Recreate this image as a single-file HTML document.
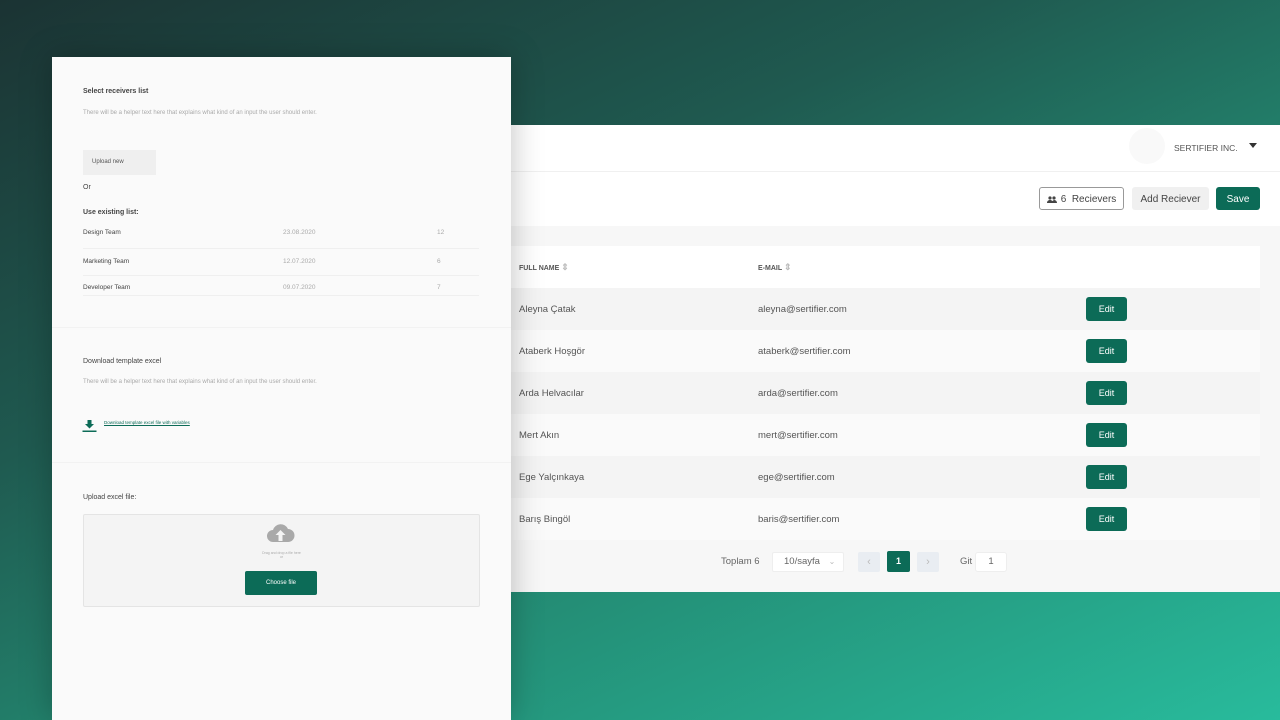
<!DOCTYPE html>
<html><head><meta charset="utf-8"><style>
*{margin:0;padding:0;box-sizing:border-box}
body{width:1280px;height:720px;overflow:hidden;position:relative;font-family:"Liberation Sans",sans-serif;background:linear-gradient(155deg,#1b3333 0%,#1f5a50 35%,#23866f 60%,#28bb9c 100%)}
.abs{position:absolute}
#right{left:511px;top:125px;width:769px;height:467px;background:#f7f7f7}
#hdr{left:0;top:0;width:769px;height:47px;background:#fff;border-bottom:1px solid #f0f0f0}
#tool{left:0;top:47px;width:769px;height:54px;background:#fff}
.btn{position:absolute;font-size:10px;display:flex;align-items:center;justify-content:center;border-radius:3px}
#tbl{left:0;top:121px;width:749px;height:293px;background:#fff}
.row{position:absolute;left:0;width:749px;height:42px;font-size:9.5px;color:#555}
.row span{position:absolute;top:16px}
.edit{position:absolute;left:575px;top:9px;width:41px;height:24px;background:#0c6b57;color:#fff;font-size:9px;border-radius:3px;display:flex;align-items:center;justify-content:center}
#left{left:52px;top:57px;width:459px;height:663px;background:#fafafa;box-shadow:0 0 30px rgba(0,0,0,.25)}
.t{position:absolute;font-size:7px;color:#444}
.h{position:absolute;font-size:6px;color:#aaa}
.line{position:absolute;height:1px;background:#efefef}
</style></head><body>
<div id="right" class="abs">
 <div id="hdr" class="abs">
  <div class="abs" style="left:618px;top:3px;width:36px;height:36px;border-radius:50%;background:#f9f9f9"></div>
  <div class="abs" style="left:663px;top:18px;font-size:8.5px;color:#555">SERTIFIER INC.</div>
  <div class="abs" style="left:738px;top:18px;width:0;height:0;border-left:4px solid transparent;border-right:4px solid transparent;border-top:5px solid #333"></div>
 </div>
 <div id="tool" class="abs">
  <div class="btn" style="left:528px;top:15px;width:85px;height:23px;border:1px solid #999;color:#444;background:#fff;padding-top:2px"><svg width="10" height="8" viewBox="0 0 10 8" style="margin-right:4px"><circle cx="3" cy="2" r="1.6" fill="#444"/><circle cx="7" cy="2" r="1.6" fill="#444"/><path d="M0 7c0-2 1.5-3 3-3s3 1 3 3zM5 7c0-1.5.5-2.5 2-3 1.5 0 3 1 3 3z" fill="#444"/></svg>6 &nbsp;Recievers</div>
  <div class="btn" style="left:621px;top:15px;width:77px;height:23px;background:#f0f0f0;color:#444;padding-top:1px">Add Reciever</div>
  <div class="btn" style="left:705px;top:15px;width:44px;height:23px;background:#0c6b57;color:#fff;padding-top:2px">Save</div>
 </div>
 <div id="tbl" class="abs">
  <div class="row" style="top:0;background:#fff;font-size:7px;font-weight:bold;color:#555"><span style="left:8px;top:16px">FULL NAME <span style="position:static;color:#bbb;font-size:9px">⇕</span></span><span style="left:247px;top:16px">E-MAIL <span style="position:static;color:#bbb;font-size:9px">⇕</span></span></div>
  <div class="row" style="top:42px;background:#f4f4f4"><span style="left:8px">Aleyna Çatak</span><span style="left:247px">aleyna@sertifier.com</span><div class="edit">Edit</div></div>
  <div class="row" style="top:84px;background:#fafafa"><span style="left:8px">Ataberk Hoşgör</span><span style="left:247px">ataberk@sertifier.com</span><div class="edit">Edit</div></div>
  <div class="row" style="top:126px;background:#f4f4f4"><span style="left:8px">Arda Helvacılar</span><span style="left:247px">arda@sertifier.com</span><div class="edit">Edit</div></div>
  <div class="row" style="top:168px;background:#fafafa"><span style="left:8px">Mert Akın</span><span style="left:247px">mert@sertifier.com</span><div class="edit">Edit</div></div>
  <div class="row" style="top:210px;background:#f4f4f4"><span style="left:8px">Ege Yalçınkaya</span><span style="left:247px">ege@sertifier.com</span><div class="edit">Edit</div></div>
  <div class="row" style="top:252px;background:#fafafa"><span style="left:8px">Barış Bingöl</span><span style="left:247px">baris@sertifier.com</span><div class="edit">Edit</div></div>
 </div>
 <div class="abs" style="left:210px;top:431px;font-size:9.5px;color:#666">Toplam 6</div>
 <div class="abs" style="left:261px;top:427px;width:72px;height:20px;background:#fff;border:1px solid #eee;border-radius:2px;font-size:9.5px;color:#666;padding:3px 0 0 11px">10/sayfa <span style="color:#bbb;font-size:8px;margin-left:6px">⌄</span></div>
 <div class="abs" style="left:347px;top:427px;width:22px;height:20px;background:#e9edf2;border-radius:2px;color:#bbb;font-size:11px;text-align:center;line-height:20px">‹</div>
 <div class="abs" style="left:376px;top:426px;width:23px;height:21px;background:#0c6b57;border-radius:2px;color:#fff;font-size:9px;font-weight:bold;text-align:center;line-height:21px">1</div>
 <div class="abs" style="left:406px;top:427px;width:22px;height:20px;background:#e9edf2;border-radius:2px;color:#bbb;font-size:11px;text-align:center;line-height:20px">›</div>
 <div class="abs" style="left:449px;top:431px;font-size:9.5px;color:#666">Git</div>
 <div class="abs" style="left:464px;top:427px;width:32px;height:20px;background:#fff;border:1px solid #eee;border-radius:3px;font-size:9.5px;color:#666;text-align:center;line-height:18px">1</div>
</div>
<div id="left" class="abs">
 <div class="t" style="left:31px;top:31px;font-weight:bold">Select receivers list</div>
 <div class="h" style="left:31px;top:53px">There will be a helper text here that explains what kind of an input the user should enter.</div>
 <div class="abs" style="left:31px;top:93px;width:73px;height:25px;background:#efefef;font-size:6px;color:#555;padding:9px 0 0 9px">Upload new</div>
 <div class="t" style="left:31px;top:127px">Or</div>
 <div class="t" style="left:31px;top:152px;font-weight:bold">Use existing list:</div>
 <div class="t" style="left:31px;top:172px;font-size:6.5px">Design Team</div><div class="h" style="left:231px;top:172px;font-size:6.5px">23.08.2020</div><div class="h" style="left:385px;top:172px;font-size:6.5px">12</div>
 <div class="line" style="left:31px;top:191px;width:396px"></div>
 <div class="t" style="left:31px;top:201px;font-size:6.5px">Marketing Team</div><div class="h" style="left:231px;top:201px;font-size:6.5px">12.07.2020</div><div class="h" style="left:385px;top:201px;font-size:6.5px">6</div>
 <div class="line" style="left:31px;top:218px;width:396px"></div>
 <div class="t" style="left:31px;top:227px;font-size:6.5px">Developer Team</div><div class="h" style="left:231px;top:227px;font-size:6.5px">09.07.2020</div><div class="h" style="left:385px;top:227px;font-size:6.5px">7</div>
 <div class="line" style="left:31px;top:238px;width:396px"></div>
 <div class="line" style="left:0;top:270px;width:459px;background:#f2f2f2"></div>
 <div class="t" style="left:31px;top:301px">Download template excel</div>
 <div class="h" style="left:31px;top:322px">There will be a helper text here that explains what kind of an input the user should enter.</div>
 <svg class="abs" style="left:30px;top:362px" width="15" height="14" viewBox="0 0 15 14"><path d="M5.5 1h4v4h2.5l-4.5 4.5L3 5h2.5z" fill="#0c6b57"/><rect x="0.5" y="11.5" width="14" height="1.5" fill="#0c6b57"/></svg>
 <div class="abs" style="left:52px;top:363px;font-size:4.5px;color:#0c6b57;text-decoration:underline">Download template excel file with variables</div>
 <div class="line" style="left:0;top:405px;width:459px;background:#f2f2f2"></div>
 <div class="t" style="left:31px;top:437px">Upload excel file:</div>
 <div class="abs" style="left:31px;top:457px;width:397px;height:93px;background:#f4f4f4;border:1px solid #e4e4e4;border-radius:2px"></div>
 <svg class="abs" style="left:214px;top:466px" width="29" height="20" viewBox="0 0 29 20"><path d="M7 19a6 6 0 010-12 8 8 0 0115-1 6.5 6.5 0 010 13z" fill="#a9a9a9"/><path d="M14.5 7l-5 5h3v6h4v-6h3z" fill="#f4f4f4"/></svg>
 <div class="abs" style="left:0;top:494px;width:459px;text-align:center;font-size:3.5px;color:#aaa">Drag and drop a file here<br>or</div>
 <div class="abs" style="left:193px;top:514px;width:72px;height:24px;background:#0c6b57;border-radius:2px;color:#fff;font-size:6px;text-align:center;line-height:24px">Choose file</div>
</div>
</body></html>
